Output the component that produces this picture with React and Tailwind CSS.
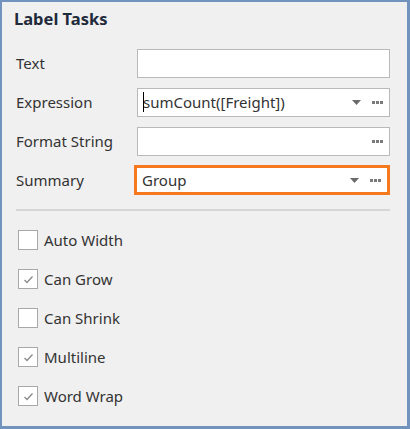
import React from 'react';

const font = { fontFamily: '"Segoe UI", "Noto Sans", "Open Sans", sans-serif' };

const Arrow = () => (
  <svg width="9" height="5" viewBox="0 0 9 5" className="shrink-0">
    <path d="M0 0h9L4.5 5z" fill="#6b6b6b" />
  </svg>
);

const Dots = () => (
  <svg width="11" height="3" viewBox="0 0 11 3" className="shrink-0">
    <rect x="0" y="0" width="3" height="3" fill="#7a7a7a" />
    <rect x="4" y="0" width="3" height="3" fill="#7a7a7a" />
    <rect x="8" y="0" width="3" height="3" fill="#7a7a7a" />
  </svg>
);

const Field = ({ label, value, arrow, dots, caret, active }) => (
  <div className="flex items-center h-[29px]">
    <div className="w-[121px] text-[15px] text-[#333]">{label}</div>
    <div
      className={
        active
          ? 'flex items-center h-[30px] w-[258px] -ml-[2px] border-[3px] border-[#f7791f] bg-white pl-[5px] pr-[6px]'
          : 'flex items-center h-[29px] w-[253px] border border-[#b9b9b9] bg-white pl-[5px] pr-[6px]'
      }
    >
      <div className="flex-1 text-[15px] text-[#333] relative leading-none">
        {caret && <span className="absolute left-0 top-[-3px] w-px h-[20px] bg-black" />}
        {value}
      </div>
      {arrow && <div className="ml-2 mr-[11px] flex items-center"><Arrow /></div>}
      {dots && <Dots />}
    </div>
  </div>
);

const Check = ({ label, checked }) => (
  <div className="flex items-center h-[39px] gap-[6px]">
    <div className="w-[20px] h-[20px] border border-[#a8a8a8] bg-white flex items-center justify-center">
      {checked && (
        <svg width="11" height="9" viewBox="0 0 11 9">
          <path d="M1.5 5 L4 7.5 L9.5 1.5" fill="none" stroke="#8a8a8a" strokeWidth="1.3" />
        </svg>
      )}
    </div>
    <span className="text-[15px] text-[#333]">{label}</span>
  </div>
);

export default function App() {
  return (
    <div style={font} className="w-[410px] h-[429px] bg-[#7393bf] pl-[2px] pr-[3px] pb-[3px] pt-[2px]">
      <div className="w-full h-full bg-[#f0f0f0] pl-[14px] pr-[17px]">
        <div className="pt-[5px] pl-[-2px] -ml-[2px] text-[16.5px] font-bold text-[#1f2a3a]">Label Tasks</div>
        <div className="mt-[17px] flex flex-col gap-[10px]">
          <Field label="Text" value="" />
          <Field label="Expression" value="sumCount([Freight])" arrow dots caret />
          <Field label="Format String" value="" dots />
          <Field label="Summary" value="Group" arrow dots active />
        </div>
        <div className="mt-[14px] h-[2px] bg-[#d6d6d6]" />
        <div className="mt-[10px] pl-[2px]">
          <Check label="Auto Width" />
          <Check label="Can Grow" checked />
          <Check label="Can Shrink" />
          <Check label="Multiline" checked />
          <Check label="Word Wrap" checked />
        </div>
      </div>
    </div>
  );
}
